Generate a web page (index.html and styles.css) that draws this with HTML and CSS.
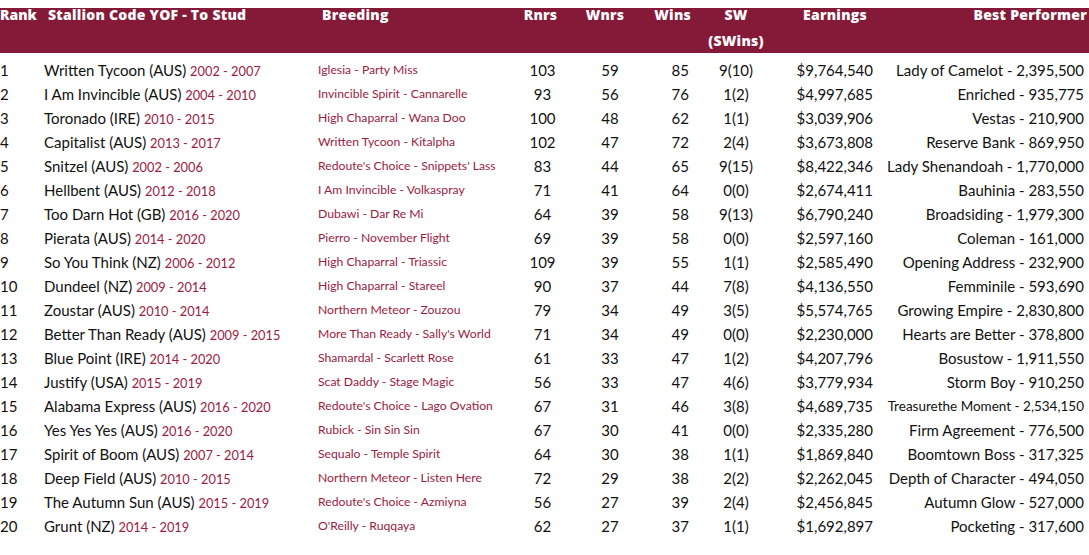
FILE: index.html
```html
<!DOCTYPE html>
<html>
<head>
<meta charset="utf-8">
<link rel="stylesheet" href="styles.css">
</head>
<body>
<div class="table">
  <div class="head">
    <div class="hc c-rank">Rank</div>
    <div class="hc c-name">Stallion Code YOF - To Stud</div>
    <div class="hc c-breed">Breeding</div>
    <div class="hc c-rnrs">Rnrs</div>
    <div class="hc c-wnrs">Wnrs</div>
    <div class="hc c-wins">Wins</div>
    <div class="hc c-sw">SW<br>(SWins)</div>
    <div class="hc c-earn">Earnings</div>
    <div class="hc c-best">Best Performer</div>
  </div>
  <div class="body">
    <div class="row"><div class="c-rank">1</div><div class="c-name">Written Tycoon (AUS) <span class="yr">2002 - 2007</span></div><div class="c-breed">Iglesia - Party Miss</div><div class="c-rnrs">103</div><div class="c-wnrs">59</div><div class="c-wins">85</div><div class="c-sw">9(10)</div><div class="c-earn">$9,764,540</div><div class="c-best">Lady of Camelot - 2,395,500</div></div>
    <div class="row"><div class="c-rank">2</div><div class="c-name">I Am Invincible (AUS) <span class="yr">2004 - 2010</span></div><div class="c-breed">Invincible Spirit - Cannarelle</div><div class="c-rnrs">93</div><div class="c-wnrs">56</div><div class="c-wins">76</div><div class="c-sw">1(2)</div><div class="c-earn">$4,997,685</div><div class="c-best">Enriched - 935,775</div></div>
    <div class="row"><div class="c-rank">3</div><div class="c-name">Toronado (IRE) <span class="yr">2010 - 2015</span></div><div class="c-breed">High Chaparral - Wana Doo</div><div class="c-rnrs">100</div><div class="c-wnrs">48</div><div class="c-wins">62</div><div class="c-sw">1(1)</div><div class="c-earn">$3,039,906</div><div class="c-best">Vestas - 210,900</div></div>
    <div class="row"><div class="c-rank">4</div><div class="c-name">Capitalist (AUS) <span class="yr">2013 - 2017</span></div><div class="c-breed">Written Tycoon - Kitalpha</div><div class="c-rnrs">102</div><div class="c-wnrs">47</div><div class="c-wins">72</div><div class="c-sw">2(4)</div><div class="c-earn">$3,673,808</div><div class="c-best">Reserve Bank - 869,950</div></div>
    <div class="row"><div class="c-rank">5</div><div class="c-name">Snitzel (AUS) <span class="yr">2002 - 2006</span></div><div class="c-breed">Redoute's Choice - Snippets' Lass</div><div class="c-rnrs">83</div><div class="c-wnrs">44</div><div class="c-wins">65</div><div class="c-sw">9(15)</div><div class="c-earn">$8,422,346</div><div class="c-best">Lady Shenandoah - 1,770,000</div></div>
    <div class="row"><div class="c-rank">6</div><div class="c-name">Hellbent (AUS) <span class="yr">2012 - 2018</span></div><div class="c-breed">I Am Invincible - Volkaspray</div><div class="c-rnrs">71</div><div class="c-wnrs">41</div><div class="c-wins">64</div><div class="c-sw">0(0)</div><div class="c-earn">$2,674,411</div><div class="c-best">Bauhinia - 283,550</div></div>
    <div class="row"><div class="c-rank">7</div><div class="c-name">Too Darn Hot (GB) <span class="yr">2016 - 2020</span></div><div class="c-breed">Dubawi - Dar Re Mi</div><div class="c-rnrs">64</div><div class="c-wnrs">39</div><div class="c-wins">58</div><div class="c-sw">9(13)</div><div class="c-earn">$6,790,240</div><div class="c-best">Broadsiding - 1,979,300</div></div>
    <div class="row"><div class="c-rank">8</div><div class="c-name">Pierata (AUS) <span class="yr">2014 - 2020</span></div><div class="c-breed">Pierro - November Flight</div><div class="c-rnrs">69</div><div class="c-wnrs">39</div><div class="c-wins">58</div><div class="c-sw">0(0)</div><div class="c-earn">$2,597,160</div><div class="c-best">Coleman - 161,000</div></div>
    <div class="row"><div class="c-rank">9</div><div class="c-name">So You Think (NZ) <span class="yr">2006 - 2012</span></div><div class="c-breed">High Chaparral - Triassic</div><div class="c-rnrs">109</div><div class="c-wnrs">39</div><div class="c-wins">55</div><div class="c-sw">1(1)</div><div class="c-earn">$2,585,490</div><div class="c-best">Opening Address - 232,900</div></div>
    <div class="row"><div class="c-rank">10</div><div class="c-name">Dundeel (NZ) <span class="yr">2009 - 2014</span></div><div class="c-breed">High Chaparral - Stareel</div><div class="c-rnrs">90</div><div class="c-wnrs">37</div><div class="c-wins">44</div><div class="c-sw">7(8)</div><div class="c-earn">$4,136,550</div><div class="c-best">Femminile - 593,690</div></div>
    <div class="row"><div class="c-rank">11</div><div class="c-name">Zoustar (AUS) <span class="yr">2010 - 2014</span></div><div class="c-breed">Northern Meteor - Zouzou</div><div class="c-rnrs">79</div><div class="c-wnrs">34</div><div class="c-wins">49</div><div class="c-sw">3(5)</div><div class="c-earn">$5,574,765</div><div class="c-best">Growing Empire - 2,830,800</div></div>
    <div class="row"><div class="c-rank">12</div><div class="c-name">Better Than Ready (AUS) <span class="yr">2009 - 2015</span></div><div class="c-breed">More Than Ready - Sally's World</div><div class="c-rnrs">71</div><div class="c-wnrs">34</div><div class="c-wins">49</div><div class="c-sw">0(0)</div><div class="c-earn">$2,230,000</div><div class="c-best">Hearts are Better - 378,800</div></div>
    <div class="row"><div class="c-rank">13</div><div class="c-name">Blue Point (IRE) <span class="yr">2014 - 2020</span></div><div class="c-breed">Shamardal - Scarlett Rose</div><div class="c-rnrs">61</div><div class="c-wnrs">33</div><div class="c-wins">47</div><div class="c-sw">1(2)</div><div class="c-earn">$4,207,796</div><div class="c-best">Bosustow - 1,911,550</div></div>
    <div class="row"><div class="c-rank">14</div><div class="c-name">Justify (USA) <span class="yr">2015 - 2019</span></div><div class="c-breed">Scat Daddy - Stage Magic</div><div class="c-rnrs">56</div><div class="c-wnrs">33</div><div class="c-wins">47</div><div class="c-sw">4(6)</div><div class="c-earn">$3,779,934</div><div class="c-best">Storm Boy - 910,250</div></div>
    <div class="row"><div class="c-rank">15</div><div class="c-name">Alabama Express (AUS) <span class="yr">2016 - 2020</span></div><div class="c-breed">Redoute's Choice - Lago Ovation</div><div class="c-rnrs">67</div><div class="c-wnrs">31</div><div class="c-wins">46</div><div class="c-sw">3(8)</div><div class="c-earn">$4,689,735</div><div class="c-best small">Treasurethe Moment - 2,534,150</div></div>
    <div class="row"><div class="c-rank">16</div><div class="c-name">Yes Yes Yes (AUS) <span class="yr">2016 - 2020</span></div><div class="c-breed">Rubick - Sin Sin Sin</div><div class="c-rnrs">67</div><div class="c-wnrs">30</div><div class="c-wins">41</div><div class="c-sw">0(0)</div><div class="c-earn">$2,335,280</div><div class="c-best">Firm Agreement - 776,500</div></div>
    <div class="row"><div class="c-rank">17</div><div class="c-name">Spirit of Boom (AUS) <span class="yr">2007 - 2014</span></div><div class="c-breed">Sequalo - Temple Spirit</div><div class="c-rnrs">64</div><div class="c-wnrs">30</div><div class="c-wins">38</div><div class="c-sw">1(1)</div><div class="c-earn">$1,869,840</div><div class="c-best">Boomtown Boss - 317,325</div></div>
    <div class="row"><div class="c-rank">18</div><div class="c-name">Deep Field (AUS) <span class="yr">2010 - 2015</span></div><div class="c-breed">Northern Meteor - Listen Here</div><div class="c-rnrs">72</div><div class="c-wnrs">29</div><div class="c-wins">38</div><div class="c-sw">2(2)</div><div class="c-earn">$2,262,045</div><div class="c-best">Depth of Character - 494,050</div></div>
    <div class="row"><div class="c-rank">19</div><div class="c-name">The Autumn Sun (AUS) <span class="yr">2015 - 2019</span></div><div class="c-breed">Redoute's Choice - Azmiyna</div><div class="c-rnrs">56</div><div class="c-wnrs">27</div><div class="c-wins">39</div><div class="c-sw">2(4)</div><div class="c-earn">$2,456,845</div><div class="c-best">Autumn Glow - 527,000</div></div>
    <div class="row"><div class="c-rank">20</div><div class="c-name">Grunt (NZ) <span class="yr">2014 - 2019</span></div><div class="c-breed">O'Reilly - Ruqqaya</div><div class="c-rnrs">62</div><div class="c-wnrs">27</div><div class="c-wins">37</div><div class="c-sw">1(1)</div><div class="c-earn">$1,692,897</div><div class="c-best">Pocketing - 317,600</div></div>
  </div>
</div>
</body>
</html>
```
FILE: styles.css
```css
html, body {
  margin: 0;
  padding: 0;
  background: #ffffff;
}
body {
  font-family: "Lato", "Liberation Sans", sans-serif;
  color: #111111;
}
.table {
  padding-top: 8px;
}
.head,
.row {
  display: grid;
  grid-template-columns: 44px 274px 192px 65px 70px 46px 90px 94px 1fr;
}
.head {
  background: #851a38;
  height: 45px;
  color: #ffffff;
  font-family: "Open Sans", "Lato", sans-serif;
  font-weight: 800;
  font-size: 14px;
  letter-spacing: 0.25px;
  line-height: 26px;
}
.hc {
  margin-top: -6px;
  white-space: nowrap;
}
.body {
  padding-top: 5px;
}
.row {
  height: 24px;
  line-height: 24px;
  font-size: 15px;
  white-space: nowrap;
}
.yr {
  color: #9a1b41;
  font-size: 12.8px;
}
.c-breed {
  color: #9a1b41;
  font-size: 12.2px;
}
.c-rnrs, .c-wnrs, .c-sw { text-align: center; }
.c-wins { text-align: right; padding-right: 2px; }
.c-earn { text-align: right; padding-right: 2px; }
.c-best { text-align: right; padding-right: 5px; }
.small { font-size: 13.5px; }
.head .c-rank { letter-spacing: 0; }
.head .c-name { padding-left: 4px; }
.head .c-breed { padding-left: 4px; color: #ffffff; font-size: 14px; }
.head .c-rnrs { padding-right: 4px; }
.head .c-wnrs { padding-right: 10px; }
.head .c-wins { padding-right: 0; }
.head .c-earn { text-align: center; padding-left: 14px; padding-right: 0; }
.head .c-best { padding-right: 2px; }
```
